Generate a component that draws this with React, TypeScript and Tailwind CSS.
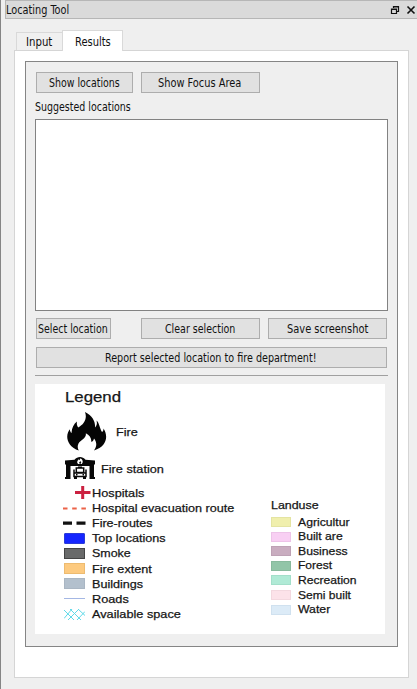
import { useLayoutEffect, useRef, useState } from 'react';
import type { ReactNode } from 'react';

/** A single line of text, condensed or extended horizontally to a given width. */
function FitText({ text, width }: { text: string; width: number }) {
  const ref = useRef<HTMLSpanElement>(null);
  const [scale, setScale] = useState(1);
  useLayoutEffect(() => {
    if (ref.current) setScale(width / ref.current.offsetWidth);
  }, [width, text]);
  return (
    <span className="flex shrink-0 whitespace-nowrap" style={{ width }}>
      <span ref={ref} className="inline-block shrink-0 origin-left" style={{ transform: `scaleX(${scale})` }}>
        {text}
      </span>
    </span>
  );
}

function Button({ text, width, className }: { text: string; width: number; className: string }) {
  return (
    <button className={`flex h-[21px] items-center justify-center border border-[#adadad] bg-[#e1e1e1] pt-px pr-px ${className}`}>
      <FitText text={text} width={width} />
    </button>
  );
}

function FireIcon() {
  return (
    <svg className="h-[39px] w-10" viewBox="0 0 40 39">
      <path
        fill="#050505"
        d="M18 0C26 4 28.500 10 28 15.500C30 13.500 30.300 11 29.500 8.500C32.500 11 32.500 16 35 20C36.200 19 36.600 17.800 36.500 16.500C41.500 24 40 34.500 27 38.500C30.500 33.500 29.500 29.500 27 26.500C26.600 28.500 25.800 29.600 24.300 30C24.600 26 22.500 23 18.800 21.200C19.800 26.500 13.500 28 11.500 31.500C10.300 34 10.500 36.500 11.800 38.500C2 35 -1.500 27 1 20.500C1.500 19 2.200 18 2.700 17.200C3 19.200 3.600 20.200 4.500 21C4.800 15.500 6.800 12 10 9.500C9.500 12 10 14 11.200 15.400C17 12.500 20.500 6.500 18 0Z"
      />
    </svg>
  );
}

function StationIcon() {
  return (
    <svg className="h-[22px] w-[30px]" viewBox="0 0 30 22">
      <path fill="#080808" d="M0 3.500L9.500 2.800C11 1 13 0 15 0S19 1 20.500 2.800L30 3.500V7.500H29V20H30V22H24.500V9H5.500V22H0V20H1V7.500H0Z" />
      <path fill="#fff" d="M15.500 1.300C18 2.800 18.500 5 16.800 7H13.200C11 5 13 3.800 13.500 2.300L14.500 3.300Z" />
      <path fill="#080808" d="M15.500 4L16.300 6L15 7L14 5.800Z" />
      <path fill="none" stroke="#080808" strokeWidth="1.500" d="M11.300 11H18.700V15.500H11.300ZM9 12.500V15.500M21 12.500V15.500M9 16H21V19.500H9Z" />
      <path fill="#080808" d="M13 9.600h4v1.500h-4ZM9 19.500h3V22H9ZM18 19.500h3V22h-3ZM11 17h1.500v1.500H11ZM17.500 17H19v1.500h-1.500Z" />
    </svg>
  );
}

const block = 'ml-px h-[11px] w-[21px]';

const layers: { text: string; width: number; symbol: ReactNode }[] = [
  {
    text: 'Hospitals',
    width: 52,
    symbol: (
      <svg className="ml-3 h-[15px] w-4" viewBox="0 0 16 15">
        <path d="M0 7.500H15.500M7.700 1V14" stroke="#cb2140" strokeWidth="3" />
      </svg>
    ),
  },
  {
    text: 'Hospital evacuation route',
    width: 142.5,
    symbol: (
      <svg className="h-[15px] w-6" viewBox="0 0 24 15">
        <path d="M0 8.500H23" stroke="#ec6248" strokeWidth="2" strokeDasharray="4.500 4.700" />
      </svg>
    ),
  },
  {
    text: 'Fire-routes',
    width: 61,
    symbol: (
      <svg className="h-[15px] w-6" viewBox="0 0 24 15">
        <path d="M0 8.200H23" stroke="#111" strokeWidth="3.200" strokeDasharray="9 4.500" />
      </svg>
    ),
  },
  { text: 'Top locations', width: 73.5, symbol: <div className={`${block} rounded-[1px] border border-[#2b3bd8] bg-[#1526ff]`} /> },
  { text: 'Smoke', width: 39, symbol: <div className={`${block} border border-[#454545] bg-[#696a6a]`} /> },
  { text: 'Fire extent', width: 59.5, symbol: <div className={`${block} border border-[#edbb70] bg-[#fdca7f]`} /> },
  { text: 'Buildings', width: 51.5, symbol: <div className={`${block} border border-[#aab6c3] bg-[#b3c0cd]`} /> },
  { text: 'Roads', width: 36.5, symbol: <div className="ml-px h-px w-[21px] bg-[#a4b7e4]" /> },
  {
    text: 'Available space',
    width: 88.5,
    symbol: (
      <svg className="ml-px h-[11px] w-[21px]" viewBox="0 0 21 11">
        <path
          d="M0 1L10 11M6 0L17 11M14 0L21 6.500M0 9.500L8 0M4 11L15 0M13 11L21 2.500"
          fill="none"
          stroke="#5fd9e8"
          strokeWidth="1"
        />
      </svg>
    ),
  },
];

const landuse = [
  { text: 'Agricultur', width: 52, color: 'bg-[#f0efad] border-[#e4e4a2]' },
  { text: 'Built are', width: 44.5, color: 'bg-[#f8cff3] border-[#edc3e8]' },
  { text: 'Business', width: 50, color: 'bg-[#c9adc0] border-[#bea2b5]' },
  { text: 'Forest', width: 34.5, color: 'bg-[#92c5a8] border-[#88ba9d]' },
  { text: 'Recreation', width: 59, color: 'bg-[#b0ead6] border-[#a3dfca]' },
  { text: 'Semi built', width: 53.5, color: 'bg-[#fce2e9] border-[#f3d8df]' },
  { text: 'Water', width: 32, color: 'bg-[#dcebf7] border-[#d0e1ef]' },
];

function Legend() {
  return (
    <div className="mt-2 ml-[9px] flex h-[250px] w-[350px] bg-white font-['Liberation_Sans',Arial,sans-serif] text-[11.500px] leading-[15px] text-[#161616] [-webkit-text-stroke:0.250px_#161616]">
      <div className="w-[236px] pl-7">
        <div className="ml-[2px] pt-[3px] text-[15px] leading-5">
          <FitText text="Legend" width={56} />
        </div>
        <div className="mt-[5px] ml-1 flex h-[39px] items-center gap-[9px]">
          <FireIcon />
          <div className="pt-[2px]">
            <FitText text="Fire" width={22} />
          </div>
        </div>
        <div className="mt-[6px] ml-[2px] flex h-[22px] items-center gap-[6px]">
          <StationIcon />
          <div className="pt-[2px]">
            <FitText text="Fire station" width={63} />
          </div>
        </div>
        <div className="mt-[6px]">
          {layers.map((l) => (
            <div key={l.text} className="flex h-[15.200px] items-center">
              <div className="flex w-[29px] shrink-0 items-center">{l.symbol}</div>
              <div className="pt-px">
                <FitText text={l.text} width={l.width} />
              </div>
            </div>
          ))}
        </div>
      </div>
      <div className="pt-[114px]">
        <FitText text="Landuse" width={47.5} />
        <div className="mt-[2px]">
          {landuse.map((l) => (
            <div key={l.text} className="flex h-[14.550px] items-center">
              <div className={`mr-[6.500px] h-[10px] w-5 border ${l.color}`} />
              <FitText text={l.text} width={l.width} />
            </div>
          ))}
        </div>
      </div>
    </div>
  );
}

export default function App() {
  return (
    <div className="h-[689px] w-[417px] overflow-hidden border-l border-[#858585] bg-[#efefef] pl-1 font-['DejaVu_Sans_Condensed','DejaVu_Sans',sans-serif] text-[11.500px] leading-4 text-[#111]">
      <header className="flex h-[19px] items-center justify-between border-y border-l border-[#b6b6b6] bg-[#dadada] pt-px">
        <FitText text="Locating Tool" width={63} />
        <svg className="h-[10px] w-[27px]" viewBox="0 0 27 10" fill="none" stroke="#111">
          <path d="M3.500 3V1.500H8.500V6.500H7M3 2H9M1.500 4V8.500H6.500V4ZM1 4.500H7" strokeWidth="1.200" />
          <path d="M17.500 1.500L24.500 8.500M24.500 1.500L17.500 8.500" strokeWidth="1.600" />
        </svg>
      </header>

      <div className="mt-[11px] ml-[11px] flex h-[20px] items-end">
        <div className="flex h-[18px] w-[46px] items-center justify-center border border-r-0 border-b-0 border-[#d9d9d9] bg-[#f0f0f0] pt-px">
          <FitText text="Input" width={26.5} />
        </div>
        <div className="z-10 -mb-px flex h-[21px] w-[61px] items-center justify-center border border-b-0 border-[#d9d9d9] bg-white pt-px">
          <FitText text="Results" width={35.5} />
        </div>
      </div>

      <div className="ml-[9px] h-[628px] w-[395px] border border-[#d5d5d5] bg-white pt-[10px] pl-[10px]">
        <div className="h-[586px] w-[373px] border border-[#858585] bg-[#efefef] pt-[10px]">
          <div className="ml-[10px] flex gap-2">
            <Button text="Show locations" width={71} className="w-[97px]" />
            <Button text="Show Focus Area" width={83.5} className="w-[119px]" />
          </div>
          <div className="mt-[6px] ml-[8.500px] h-5">
            <FitText text="Suggested locations" width={96} />
          </div>
          <div className="ml-[9px] h-[192px] w-[353px] border border-[#828282] bg-white" />
          <div className="mt-[7px] ml-[10px] flex">
            <Button text="Select location" width={69.5} className="w-[75px]" />
            <Button text="Clear selection" width={70.5} className="ml-[30px] w-[119px]" />
            <Button text="Save screenshot" width={81} className="ml-2 w-[119px]" />
          </div>
          <div className="mt-2 ml-[10px]">
            <Button text="Report selected location to fire department!" width={211.5} className="w-[351px]" />
          </div>
          <div className="mt-[7px] ml-[9px] h-px w-[353px] bg-[#a0a0a0]" />
          <Legend />
        </div>
      </div>
    </div>
  );
}
